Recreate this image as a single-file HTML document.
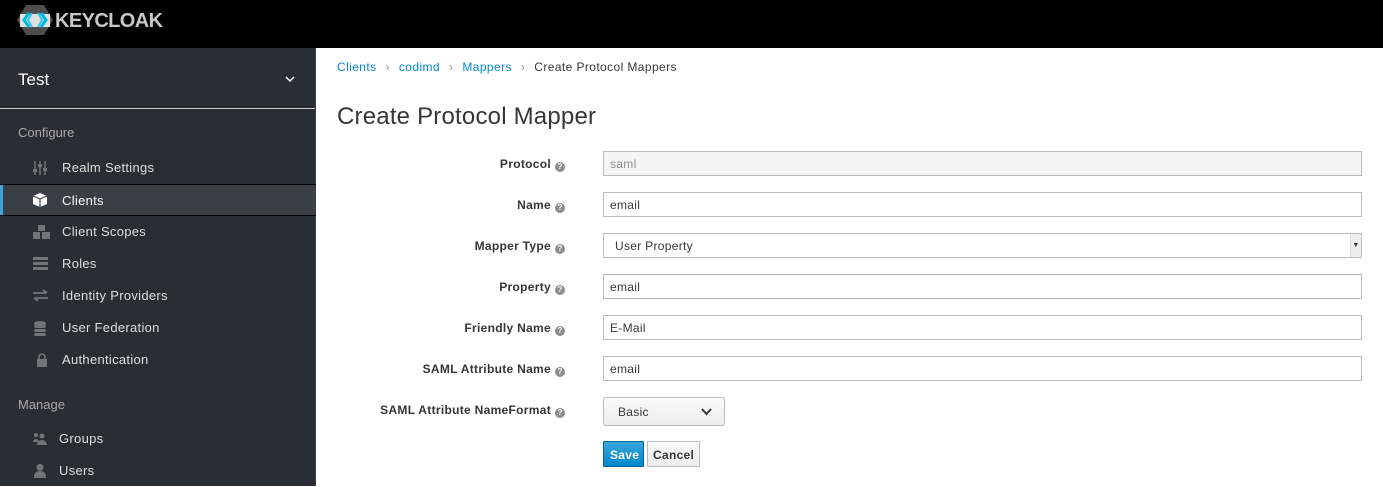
<!DOCTYPE html>
<html><head><style>
*{box-sizing:border-box;margin:0;padding:0}
body{width:1383px;height:486px;overflow:hidden;font-family:"Liberation Sans",sans-serif;font-size:12px;background:#fff;position:relative}
.hdr{position:absolute;left:0;top:0;width:1383px;height:48px;background:#000}
.side{position:absolute;left:0;top:48px;width:316px;height:438px;background:#292e34;border-right:1px solid #3a3f44}
.realm{height:61px;border-bottom:1px solid #d1d1d1;color:#fff;font-size:17px;padding:22px 0 0 18px;position:relative}
.sec{color:#aaa;font-size:13px;padding-left:18px;position:absolute}
.it{position:absolute;left:0;width:316px;height:32px;color:#dfdfdf;font-size:13px;line-height:32px;padding-left:62px;letter-spacing:0.3px}
.it svg{position:absolute;left:33px;top:9px}
.act{background:#393f44;border-top:1px solid #000;border-bottom:1px solid #000;color:#fff}
.act:before{content:"";position:absolute;left:0;top:0;width:3px;height:100%;background:#39a5dc}
.bc{position:absolute;left:337px;top:60px;font-size:12px;color:#363636;letter-spacing:0.4px}
.bc a{color:#0088ce}
.bc i{font-style:normal;color:#8b8d8f;margin:0 9px}
h1{position:absolute;left:337px;top:103px;font-size:24px;color:#363636;font-weight:normal;letter-spacing:0.2px}
.lab{position:absolute;right:818px;font-weight:bold;color:#363636;font-size:12px;text-align:right;white-space:nowrap;letter-spacing:0.3px}
.q{display:inline-block;width:10px;height:10px;border-radius:50%;background:#8b8d8f;color:#fff;font-size:8px;line-height:10px;text-align:center;margin-left:4px;vertical-align:-1px;letter-spacing:0}
.inp{position:absolute;left:603px;width:759px;height:25px;border:1px solid #bbb;padding:5px 6px;color:#363636;font-size:12px;letter-spacing:0.3px}
.btn{position:absolute;border:1px solid #bbb;border-radius:1px;font-size:12px;background:linear-gradient(#fafafa,#ededed);color:#363636;letter-spacing:0.3px}
</style></head><body>
<div class="hdr">
<svg style="position:absolute;left:17px;top:5px" width="36" height="30" viewBox="0 0 36 30"><polygon points="9,0 27,0 36,15 27,30 9,30 0,15" fill="#4d4d4d"/><polygon points="3,9 33,9 33,22 3,22" fill="#e0e0e0"/><path d="M12,8 L7,15 L12,22 M24,8 L29,15 L24,22" stroke="#00b8e3" stroke-width="3" fill="none"/><path d="M15,8 L11,15 L15,22 M21,8 L25,15 L21,22" stroke="#33c6e9" stroke-width="2" fill="none"/></svg>
<div style="position:absolute;left:55px;top:10px;color:#c7c7c7;font-weight:bold;font-size:20px;letter-spacing:-0.6px">KEYCLOAK</div>
</div>
<div class="side">
<div class="realm">Test<svg style="position:absolute;right:20px;top:28px" width="10" height="7"><path d="M1,1 L5,5 L9,1" stroke="#fff" stroke-width="1.5" fill="none"/></svg></div>
<div class="sec" style="top:77px">Configure</div>
<div class="it" style="top:104px"><svg width="14" height="14"><path d="M2,0V14M7,0V14M12,0V14" stroke="#72767b" stroke-width="1.5"/><rect x="0" y="8" width="4" height="3" fill="#72767b"/><rect x="5" y="3" width="4" height="3" fill="#72767b"/><rect x="10" y="7" width="4" height="3" fill="#72767b"/></svg>Realm Settings</div>
<div class="it act" style="top:136px"><svg width="14" height="14" style="top:8px"><path d="M7,0 L14,3 L14,11 L7,14 L0,11 L0,3Z" fill="#fff"/><path d="M0,3 L7,6 L14,3 M7,6V14" stroke="#393f44" stroke-width="1.2" fill="none"/></svg>Clients</div>
<div class="it" style="top:168px"><svg width="18" height="15"><rect x="5" y="0" width="7" height="6" fill="#72767b"/><rect x="0" y="7" width="7" height="7" fill="#72767b"/><rect x="9" y="7" width="8" height="7" fill="#72767b"/></svg>Client Scopes</div>
<div class="it" style="top:200px"><svg width="15" height="13"><rect y="0" width="15" height="3" fill="#72767b"/><rect y="5" width="15" height="3" fill="#72767b"/><rect y="10" width="15" height="3" fill="#72767b"/></svg>Roles</div>
<div class="it" style="top:232px"><svg width="15" height="13"><path d="M0,4H13M10,1L14,4M15,9H2M5,12L1,9" stroke="#72767b" stroke-width="1.8" fill="none"/></svg>Identity Providers</div>
<div class="it" style="top:264px"><svg width="14" height="15" style="left:34px"><ellipse cx="6" cy="2.5" rx="6" ry="2.5" fill="#72767b"/><rect x="0" y="4" width="12" height="3" rx="2" fill="#72767b"/><rect x="0" y="8" width="12" height="3" rx="2" fill="#72767b"/><rect x="0" y="12" width="12" height="3" rx="2" fill="#72767b"/></svg>User Federation</div>
<div class="it" style="top:296px"><svg width="12" height="14" style="left:36px"><path d="M3,7V4a3,3 0 0 1 6,0V7" stroke="#72767b" stroke-width="1.6" fill="none"/><rect x="1" y="6" width="10" height="8" fill="#72767b"/></svg>Authentication</div>
<div class="sec" style="top:349px">Manage</div>
<div class="it" style="top:375px;padding-left:59px"><svg width="14" height="13"><circle cx="3" cy="3" r="2" fill="#72767b"/><circle cx="9" cy="4" r="2.5" fill="#72767b"/><path d="M0,10a3,3 0 0 1 6,0Z M4,13a5,5 0 0 1 10,0Z" fill="#72767b"/></svg>Groups</div>
<div class="it" style="top:407px;padding-left:59px"><svg width="12" height="14" style="left:34px"><circle cx="6" cy="3.5" r="3.5" fill="#72767b"/><path d="M0,14V12a6,5 0 0 1 12,0V14Z" fill="#72767b"/></svg>Users</div>
</div>
<div class="bc"><a>Clients</a><i>›</i><a>codimd</a><i>›</i><a>Mappers</a><i>›</i>Create Protocol Mappers</div>
<h1>Create Protocol Mapper</h1>
<div class="lab" style="top:157px">Protocol<span class="q">?</span></div>
<div class="inp" style="top:151px;background:#f5f5f5;color:#8b8d8f">saml</div>
<div class="lab" style="top:198px">Name<span class="q">?</span></div>
<div class="inp" style="top:192px">email</div>
<div class="lab" style="top:239px">Mapper Type<span class="q">?</span></div>
<div class="inp" style="top:233px;padding-left:11px">User Property<span style="position:absolute;right:0;top:0;width:11px;height:23px;background:#eee;border-left:1px solid #ddd;font-size:7px;text-align:center;line-height:23px">▼</span></div>
<div class="lab" style="top:280px">Property<span class="q">?</span></div>
<div class="inp" style="top:274px">email</div>
<div class="lab" style="top:321px">Friendly Name<span class="q">?</span></div>
<div class="inp" style="top:315px">E-Mail</div>
<div class="lab" style="top:362px">SAML Attribute Name<span class="q">?</span></div>
<div class="inp" style="top:356px">email</div>
<div class="lab" style="top:403px">SAML Attribute NameFormat<span class="q">?</span></div>
<div class="btn" style="left:603px;top:397px;width:122px;height:29px;padding:7px 14px;border-radius:3px">Basic<svg style="position:absolute;right:12px;top:10px" width="11" height="8"><path d="M1,1 L5.5,6 L10,1" stroke="#363636" stroke-width="2" fill="none"/></svg></div>
<div class="btn" style="left:603px;top:441px;width:41px;height:26px;background:linear-gradient(#39a5dc,#0088ce);border-color:#00659c;color:#fff;font-weight:bold;padding:6px 6px">Save</div>
<div class="btn" style="left:647px;top:441px;width:53px;height:26px;padding:6px 5px;font-weight:bold">Cancel</div>
</body></html>
